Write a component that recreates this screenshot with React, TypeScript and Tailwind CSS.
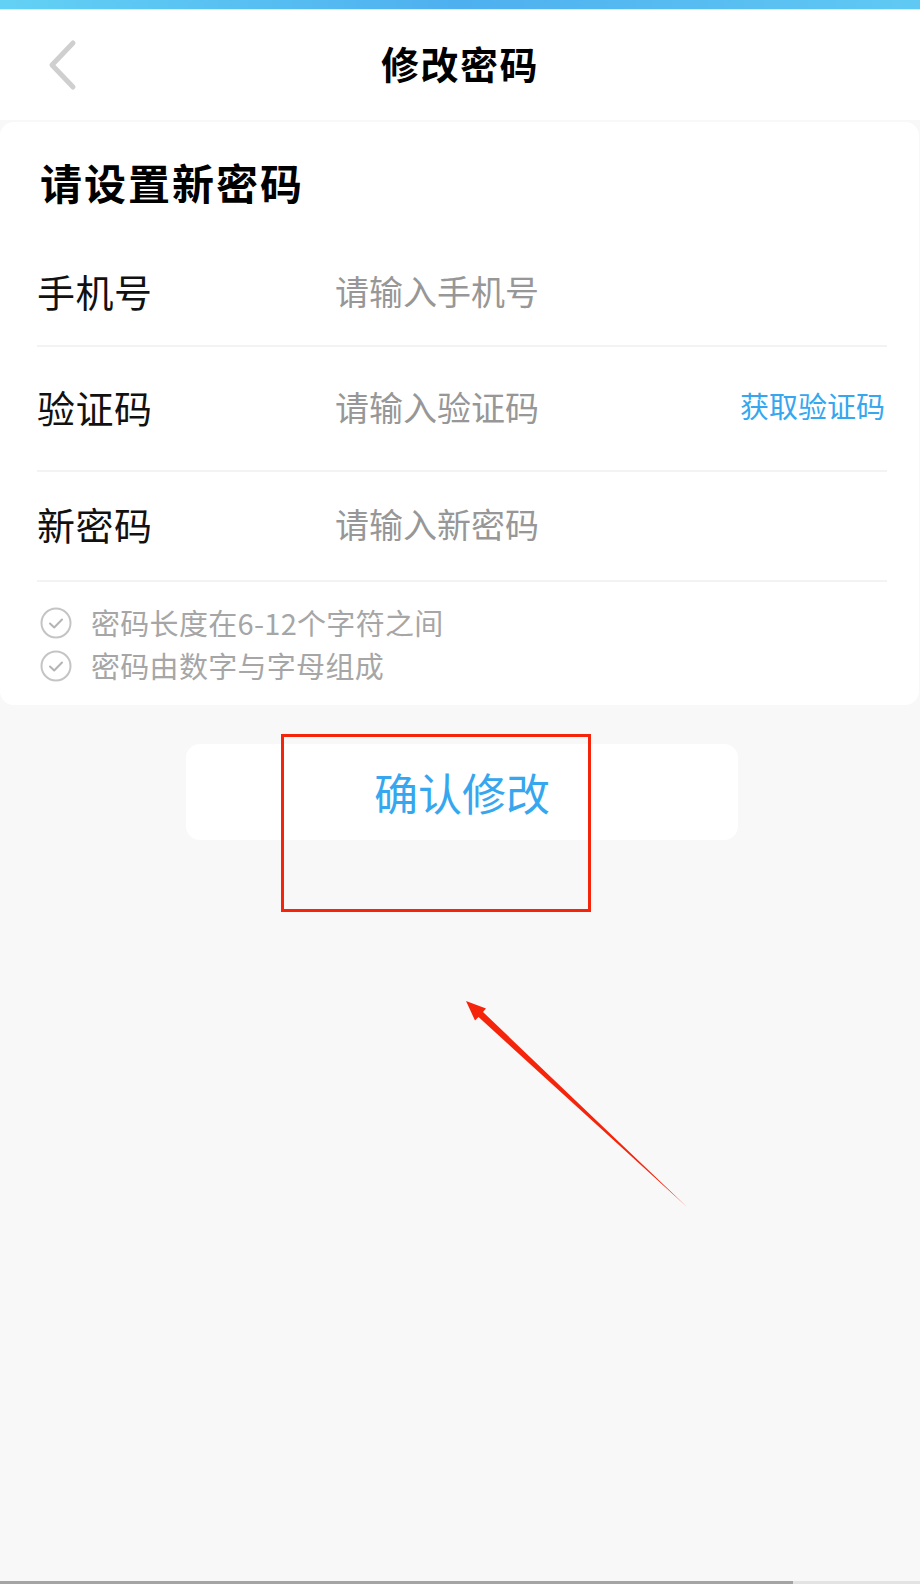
import { useState } from "react";

const CheckIcon = () => (
    <svg width="32" height="32" viewBox="0 0 32 32" fill="none" className="shrink-0">
        <circle cx="16" cy="16" r="14.5" stroke="#c4c4c4" strokeWidth="2" />
        <path d="M10 16.5 L14.2 20.5 L22 12.5" stroke="#b4b4b4" strokeWidth="2" strokeLinecap="round" strokeLinejoin="round" />
    </svg>
);

const Field = ({ label, placeholder, height, action }: { label: string; placeholder: string; height: string; action?: string }) => {
    const [value, setValue] = useState('');
    return (
        <div className={`flex items-center pb-[5px] ${height}`}>
            <span className="w-[298px] shrink-0 text-[38px] tracking-[0.5px] text-[#111]">{label}</span>
            <input
                value={value}
                onChange={e => setValue(e.target.value)}
                placeholder={placeholder}
                className="flex-1 min-w-0 bg-transparent outline-none text-[34px] text-[#333] placeholder:text-[#979797]"
            />
            {action && <button type="button" className="text-[29px] text-[#36a7ef] pr-[2px]">{action}</button>}
        </div>
    );
};

export default function App() {
    return (
        <div className="relative w-[920px] h-[1584px] flex flex-col bg-[#f8f8f8] overflow-hidden font-['Noto_Sans_CJK_SC','Noto_Sans',sans-serif]">
            {/* status strip */}
            <div className="h-[9px] bg-linear-to-r from-[#63d1f4] via-[#4eb0ef] to-[#60c9f3]" />
            <div className="h-px bg-[#cdeffc]" />

            {/* header */}
            <div className="relative h-[110px] bg-white flex items-center justify-center">
                <button type="button" className="absolute left-[40px] top-[28px] w-[40px] h-[54px] flex items-center justify-center">
                    <svg width="34" height="54" viewBox="0 0 34 54" fill="none">
                        <polyline points="30,5 9,27 30,49" stroke="#cfcfcf" strokeWidth="5" strokeLinecap="round" strokeLinejoin="round" />
                    </svg>
                </button>
                <h1 className="text-[38px] font-bold tracking-[1.5px] text-black leading-none -mt-[4px]">修改密码</h1>
            </div>

            {/* form card */}
            <div className="mt-[2px] mr-px bg-white rounded-[14px] pl-[37px] pr-[32px]">
                <h2 className="pt-[35px] pb-[3px] leading-[50px] text-[42px] font-bold tracking-[2px] text-black pl-[3px]">请设置新密码</h2>
                <div className="mt-[31px]">
                    <Field label="手机号" placeholder="请输入手机号" height="h-[104px]" />
                    <div className="h-[2px] bg-[#f3f3f3]" />
                    <Field label="验证码" placeholder="请输入验证码" height="h-[123px]" action="获取验证码" />
                    <div className="h-[2px] bg-[#f3f3f3]" />
                    <Field label="新密码" placeholder="请输入新密码" height="h-[108px]" />
                    <div className="h-[2px] bg-[#f3f3f3]" />
                </div>
                <div className="pt-[19px] pb-[18px]">
                    {['密码长度在6-12个字符之间', '密码由数字与字母组成'].map(t => (
                        <div key={t} className="flex items-center gap-[19px] h-[43px] pl-[3px]">
                            <CheckIcon />
                            <span className="text-[29px] tracking-[0.3px] text-[#a6a6a6]">{t}</span>
                        </div>
                    ))}
                </div>
            </div>

            {/* submit */}
            <button type="button" className="mt-[39px] ml-[186px] w-[552px] h-[96px] rounded-[14px] bg-white text-[44px] text-[#36a7ef] flex items-center justify-center">
                确认修改
            </button>

            <div className="flex-1" />

            {/* bottom edge */}
            <div className="h-[3px] flex">
                <div className="w-[793px] bg-[#a4a4a4]" />
                <div className="flex-1 bg-[#e3e3e3]" />
            </div>

            {/* red annotation over the page */}
            <svg className="absolute left-0 top-0 pointer-events-none" width="920" height="1584" viewBox="0 0 920 1584">
                <rect x="282.5" y="735.5" width="307" height="175" fill="none" stroke="#f5250c" strokeWidth="3" />
                <polygon points="466,1001 486,1008.5 483,1012 687,1207 478.5,1017 475,1020.5" fill="#f5250c" />
            </svg>
        </div>
    );
}
